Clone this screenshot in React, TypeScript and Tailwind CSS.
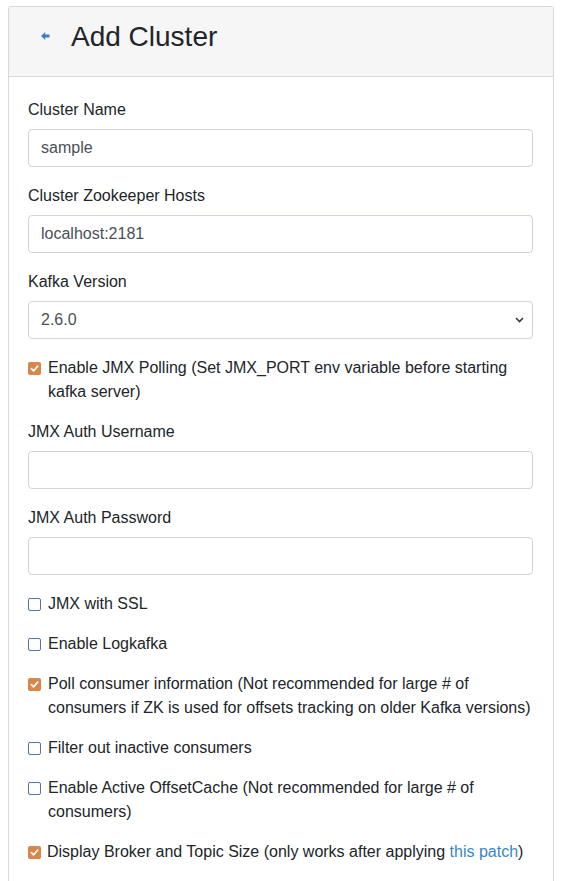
import React from "react";

function Check({ checked }: { checked: boolean }) {
  if (checked) {
    return (
      <span className="mt-[6px] flex h-[13px] w-[13px] shrink-0 items-center justify-center rounded-[2px] bg-[#d8874c]">
        <svg width="9" height="9" viewBox="0 0 10 10" fill="none">
          <path d="M1.5 5.2 L4 7.6 L8.6 2.4" stroke="white" strokeWidth="1.8" strokeLinecap="round" strokeLinejoin="round" />
        </svg>
      </span>
    );
  }
  return <span className="mt-[6px] block h-[13px] w-[13px] shrink-0 rounded-[2px] border border-[#4f74a6] bg-white" />;
}

function CheckRow({ checked, children, gap = "gap-[7px]" }: { checked: boolean; children: React.ReactNode; gap?: string }) {
  return (
    <div className={`mb-4 flex items-start ${gap}`}>
      <Check checked={checked} />
      <span className="leading-6 text-[#212529]">{children}</span>
    </div>
  );
}

function Field({ label, value }: { label: string; value?: string }) {
  return (
    <div className="mb-[17px]">
      <div className="mb-[7px] leading-6 text-[#212529]">{label}</div>
      <div className="flex h-[38px] items-center rounded-[4px] border border-[#ced4da] bg-white px-3 text-[#495057]">
        {value}
      </div>
    </div>
  );
}

export default function App() {
  return (
    <div className="min-h-[881px] bg-white pt-[6px] font-['Liberation_Sans',Arial,sans-serif] text-[16px]">
      <div className="ml-[8px] w-[546px] rounded-t-[3px] border border-b-0 border-[#d6dadf]">
        <div className="flex h-[70px] items-center border-b border-[#d6dadf] bg-[#f6f6f7] pb-[10px] pl-[32px]">
          <svg width="9" height="8" viewBox="0 0 9 8" className="mr-[21px] mt-[-1px]">
            <path d="M0 4 L4.2 0 L4.2 2.4 L8.5 2.4 L8.5 5.6 L4.2 5.6 L4.2 8 Z" fill="#3f7fc0" />
          </svg>
          <span className="text-[28px] leading-none text-[#212529]">Add Cluster</span>
        </div>
        <div className="pl-[19px] pr-[20px] pt-[21px]">
          <Field label="Cluster Name" value="sample" />
          <Field label="Cluster Zookeeper Hosts" value="localhost:2181" />
          <div className="mb-[17px]">
            <div className="mb-[7px] leading-6 text-[#212529]">Kafka Version</div>
            <div className="flex h-[38px] items-center justify-between rounded-[4px] border border-[#ced4da] bg-white pl-3 pr-[8px] text-[#495057]">
              <span>2.6.0</span>
              <svg width="9" height="6" viewBox="0 0 9 6" fill="none">
                <path d="M1 1 L4.5 4.5 L8 1" stroke="#343a40" strokeWidth="1.6" />
              </svg>
            </div>
          </div>
          <CheckRow checked>
            Enable JMX Polling (Set JMX_PORT env variable before starting kafka server)
          </CheckRow>
          <Field label="JMX Auth Username" />
          <Field label="JMX Auth Password" />
          <CheckRow checked={false}>JMX with SSL</CheckRow>
          <CheckRow checked={false}>Enable Logkafka</CheckRow>
          <CheckRow checked>
            Poll consumer information (Not recommended for large # of consumers if ZK is used for offsets tracking on older Kafka versions)
          </CheckRow>
          <CheckRow checked={false}>Filter out inactive consumers</CheckRow>
          <CheckRow checked={false}>
            Enable Active OffsetCache (Not recommended for large # of consumers)
          </CheckRow>
          <CheckRow checked gap="gap-[6px]">
            Display Broker and Topic Size (only works after applying{" "}
            <a className="text-[#3a86c8]">this patch</a>)
          </CheckRow>
          <div className="h-[40px]" />
        </div>
      </div>
    </div>
  );
}
